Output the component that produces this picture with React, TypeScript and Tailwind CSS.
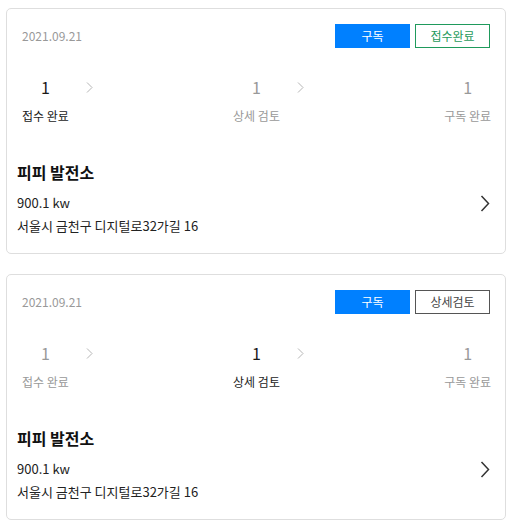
const steps = ["접수 완료", "상세 검토", "구독 완료"];

type Item = {
  active: number;
  status: string;
  statusClass: string;
};

const items: Item[] = [
  { active: 0, status: "접수완료", statusClass: "border-[#1f9a5c] text-[#1f9a5c]" },
  { active: 1, status: "상세검토", statusClass: "border-[#555] text-[#444]" },
];

const SmallChevron = () => (
  <svg width="7" height="11" viewBox="0 0 7 11" className="shrink-0 ml-[17px] mt-[6px]">
    <path d="M1 0.5 L6 5.5 L1 10.5" fill="none" stroke="#b5b5b5" strokeWidth="1" />
  </svg>
);

const Step = ({ label, on }: { label: string; on: boolean }) => (
  <div className="flex flex-col items-center">
    <span className={`text-[16px] leading-[22px] ${on ? "text-[#1a1a1a]" : "text-[#999]"}`}>1</span>
    <span className={`mt-[9px] text-[12px] leading-[18px] ${on ? "text-[#1a1a1a]" : "text-[#999]"}`}>
      {label}
    </span>
  </div>
);

const Card = ({ item }: { item: Item }) => (
  <div className="border border-[#dedede] rounded-[5px] bg-white">
    <div className="flex items-center justify-between pt-[15px] pl-[15px] pr-[15px]">
      <span className="text-[12px] text-[#999]">2021.09.21</span>
      <div className="flex gap-[5px]">
        <button className="w-[75px] h-[24px] bg-[#0080ff] text-white text-[12px]">구독</button>
        <button className={`w-[75px] h-[24px] border bg-white text-[12px] ${item.statusClass}`}>
          {item.status}
        </button>
      </div>
    </div>

    <div className="flex items-start mt-[28px] pl-[15px] pr-[14px]">
      <Step label={steps[0]} on={item.active === 0} />
      <SmallChevron />
      <div className="flex-1" />
      <Step label={steps[1]} on={item.active === 1} />
      <SmallChevron />
      <div className="flex-1" />
      <Step label={steps[2]} on={item.active === 2} />
    </div>

    <div className="flex items-center justify-between mt-[35px] pl-[10px] pr-[15px] pb-[17px]">
      <div className="flex flex-col">
        <span className="text-[16px] leading-[24px] font-bold text-[#111]">피피 발전소</span>
        <span className="mt-[9px] text-[13px] leading-[20px] text-[#222]">900.1 kw</span>
        <span className="mt-[3px] text-[13px] leading-[20px] text-[#222]">서울시 금천구 디지털로32가길 16</span>
      </div>
      <svg width="10" height="17" viewBox="0 0 10 17" className="mt-[10px]">
        <path d="M1.5 1 L8.5 8.5 L1.5 16" fill="none" stroke="#333" strokeWidth="1.5" />
      </svg>
    </div>
  </div>
);

export default function App() {
  return (
    <div
      className="w-[514px] min-h-[527px] bg-white pt-[8px]"
      style={{ fontFamily: '"Noto Sans CJK KR", "Noto Sans", sans-serif' }}
    >
      <div className="ml-[6px] w-[500px] flex flex-col gap-[20px]">
        {items.map((item, i) => (
          <Card key={i} item={item} />
        ))}
      </div>
    </div>
  );
}
